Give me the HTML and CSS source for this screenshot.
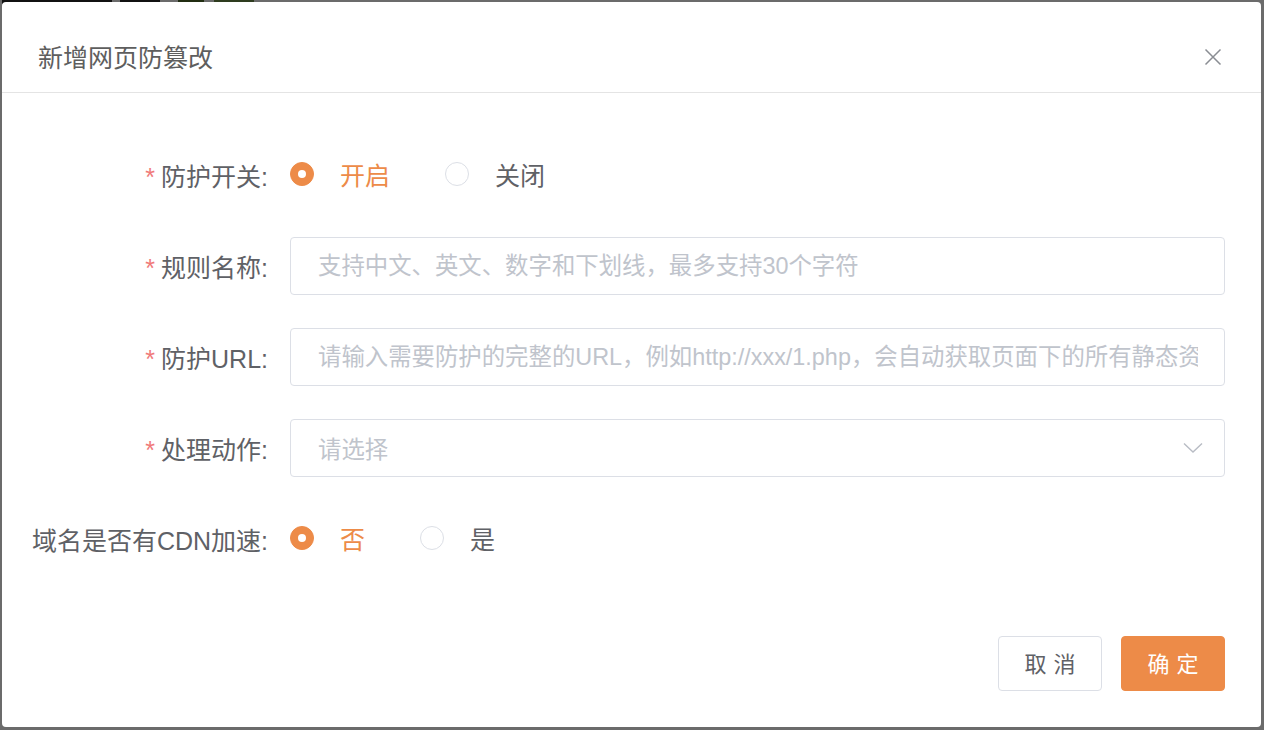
FILE: index.html
```html
<!DOCTYPE html>
<html lang="zh-CN">
<head>
<meta charset="utf-8">
<title>新增网页防篡改</title>
<link rel="stylesheet" href="styles.css">
</head>
<body>
<div class="page">
  <div class="page-top">
    <span class="page-bar"></span>
    <span class="page-bar short"></span>
    <span class="page-pic"></span>
    <span class="page-pic alt"></span>
  </div>
</div>
<div class="mask"></div>
<div class="dialog">
  <div class="dialog-header">
    <span class="dialog-title">新增网页防篡改</span>
    <button class="dialog-close" aria-label="关闭">
      <svg width="18" height="18" viewBox="0 0 18 18"><path d="M1.5 1.5 L16.5 16.5 M16.5 1.5 L1.5 16.5" stroke="#8a8d93" stroke-width="1.5" fill="none"/></svg>
    </button>
  </div>
  <div class="dialog-body">
    <div class="form-item">
      <label class="form-label"><span class="req">*</span>防护开关:</label>
      <div class="form-control radios">
        <span class="radio checked"><span class="radio-dot"></span><span class="radio-text">开启</span></span>
        <span class="radio"><span class="radio-dot"></span><span class="radio-text">关闭</span></span>
      </div>
    </div>
    <div class="form-item">
      <label class="form-label"><span class="req">*</span>规则名称:</label>
      <div class="form-control">
        <input class="input" type="text" placeholder="支持中文、英文、数字和下划线，最多支持30个字符">
      </div>
    </div>
    <div class="form-item">
      <label class="form-label"><span class="req">*</span>防护URL:</label>
      <div class="form-control">
        <input class="input" type="text" placeholder="请输入需要防护的完整的URL，例如http://xxx/1.php，会自动获取页面下的所有静态资源">
      </div>
    </div>
    <div class="form-item">
      <label class="form-label"><span class="req">*</span>处理动作:</label>
      <div class="form-control">
        <div class="select">
          <span class="select-placeholder">请选择</span>
          <svg class="select-arrow" width="20" height="12" viewBox="0 0 20 12"><path d="M1 1.5 L10 10 L19 1.5" stroke="#b8bcc4" stroke-width="1.4" fill="none"/></svg>
        </div>
      </div>
    </div>
    <div class="form-item last">
      <label class="form-label">域名是否有CDN加速:</label>
      <div class="form-control radios">
        <span class="radio checked"><span class="radio-dot"></span><span class="radio-text">否</span></span>
        <span class="radio"><span class="radio-dot"></span><span class="radio-text">是</span></span>
      </div>
    </div>
  </div>
  <div class="dialog-footer">
    <button class="btn">取消</button>
    <button class="btn primary">确定</button>
  </div>
</div>
</body>
</html>
```

FILE: styles.css
```css
html, body {
  margin: 0;
  padding: 0;
}
body {
  width: 1264px;
  height: 730px;
  overflow: hidden;
  background: #ffffff;
  font-family: "Liberation Sans", "Noto Sans CJK SC", sans-serif;
  position: relative;
}
.page {
  height: 730px;
}
.page-top {
  display: flex;
  align-items: flex-start;
  height: 20px;
  padding-left: 2px;
}
.page-bar {
  width: 110px;
  height: 4px;
  background: #2a2a2a;
}
.page-bar.short {
  width: 40px;
  margin-left: 8px;
}
.page-pic {
  width: 26px;
  height: 5px;
  background: #4f6b2a;
  margin-left: 18px;
}
.page-pic.alt {
  width: 40px;
  background: #6f8f4a;
  margin-left: 10px;
}
.mask {
  position: absolute;
  inset: 0;
  background: rgba(0, 0, 0, 0.58);
}
.dialog {
  position: absolute;
  left: 2px;
  top: 2px;
  width: 1259px;
  height: 725px;
  background: #fff;
  border-radius: 4px;
  display: flex;
  flex-direction: column;
  box-sizing: border-box;
}
.dialog-header {
  box-sizing: border-box;
  height: 91px;
  padding: 39px 36px 0 36px;
  border-bottom: 1px solid #e4e4e4;
  display: flex;
  align-items: flex-start;
  justify-content: space-between;
  flex: none;
}
.dialog-title {
  font-size: 25px;
  line-height: 35px;
  color: #5e5e5e;
}
.dialog-close {
  border: 0;
  background: none;
  padding: 0;
  width: 18px;
  height: 18px;
  margin-top: 7px;
  margin-right: 3px;
  cursor: pointer;
}
.dialog-close svg {
  display: block;
}
.dialog-body {
  padding: 53px 36px 0 0;
}
.form-item {
  display: flex;
  align-items: center;
  height: 58px;
  margin-bottom: 33px;
}
.form-item.last {
  margin-bottom: 0;
}
.form-label {
  width: 288px;
  box-sizing: border-box;
  padding-right: 22px;
  text-align: right;
  font-size: 25px;
  color: #5f6166;
  flex: none;
}
.req {
  color: #f07a7a;
  margin-right: 6px;
}
.form-control {
  flex: 1;
  min-width: 0;
}
.radios {
  display: flex;
  align-items: center;
  margin-top: -2px;
}
.radio {
  display: inline-flex;
  align-items: center;
  margin-right: 55px;
  font-size: 25px;
  color: #5f6166;
}
.radio-dot {
  width: 24px;
  height: 24px;
  box-sizing: border-box;
  border: 1px solid #dcdfe6;
  border-radius: 50%;
  background: #fff;
  position: relative;
  flex: none;
}
.radio.checked .radio-dot {
  background: #ed8b48;
  border-color: #ed8b48;
}
.radio.checked .radio-dot::after {
  content: "";
  position: absolute;
  left: 50%;
  top: 50%;
  width: 8px;
  height: 8px;
  margin: -4px 0 0 -4px;
  border-radius: 50%;
  background: #fff;
}
.radio-text {
  padding-left: 26px;
}
.radio.checked .radio-text {
  color: #ed8b48;
}
.input, .select {
  display: block;
  width: 100%;
  height: 58px;
  box-sizing: border-box;
  border: 1px solid #dcdfe6;
  border-radius: 4px;
  padding: 0 26px 0 27px;
  font-family: "Liberation Sans", "Noto Sans CJK SC", sans-serif;
  font-size: 23.4px;
  color: #5f6166;
  background: #fff;
  outline: none;
}
.input::placeholder {
  color: #c0c4cc;
}
.select {
  display: flex;
  align-items: center;
  justify-content: space-between;
  padding-right: 21px;
}
.select-placeholder {
  color: #c0c4cc;
}
.select-arrow {
  display: block;
}
.dialog-footer {
  margin-top: auto;
  display: flex;
  justify-content: flex-end;
  gap: 19px;
  padding: 0 36px 36px 0;
}
.btn {
  width: 104px;
  height: 55px;
  box-sizing: border-box;
  border: 1px solid #dcdfe6;
  border-radius: 4px;
  background: #fff;
  color: #5f6166;
  font-family: "Liberation Sans", "Noto Sans CJK SC", sans-serif;
  font-size: 22px;
  letter-spacing: 7px;
  text-indent: 7px;
  padding: 0 0 3px 0;
  cursor: pointer;
}
.btn.primary {
  background: #ed8b48;
  border-color: #ed8b48;
  color: #fff;
}
```
